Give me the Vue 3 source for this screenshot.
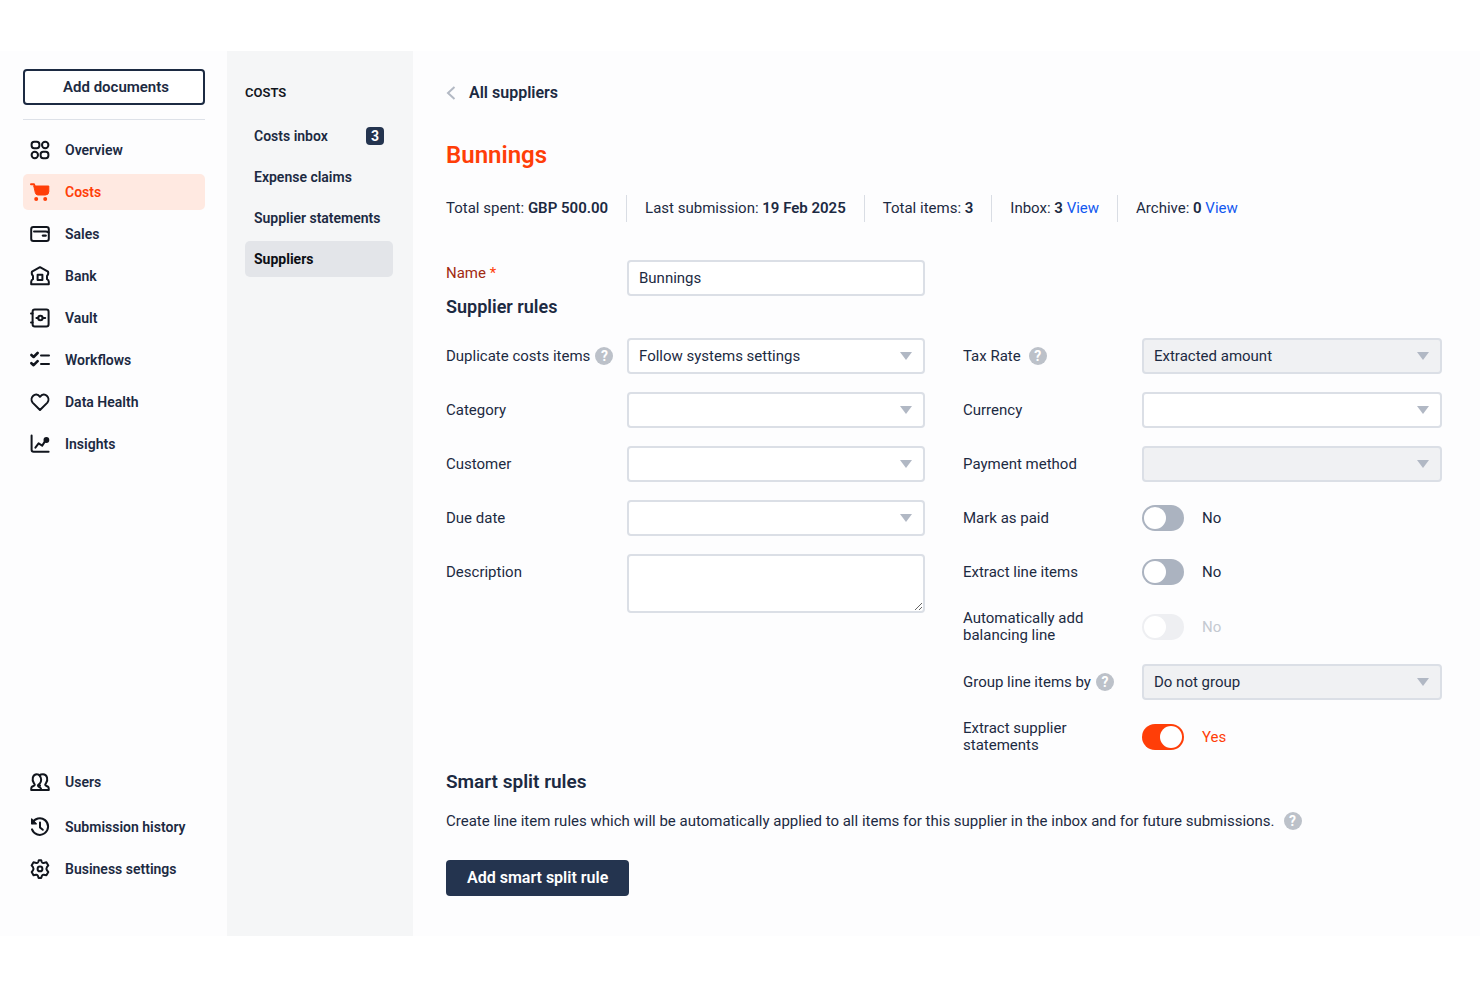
<script setup>
import { ref, reactive } from 'vue'

// inner markup of the 20x20 menu icons
const icons = {
  overview: '<rect x="1.6" y="1.8" width="7.8" height="6.4" rx="2.6"/><circle cx="15.2" cy="5" r="3.2"/><circle cx="4.8" cy="15" r="3.2"/><rect x="10.600" y="11.800" width="7.800" height="6.400" rx="2.600"/>',
  costs: '<path d="M1 2.2h3l1 3" /><path d="M4.2 4h14.6v5.6q0 3.4-3.4 3.4H7.8q-2 0-2.5-2.2z" fill="currentColor" stroke-width="1"/><circle cx="6.2" cy="17" r="2" fill="currentColor" stroke="none"/><circle cx="15.2" cy="17" r="2" fill="currentColor" stroke="none"/>',
  sales: '<rect x="1.2" y="3" width="17.6" height="14" rx="2.2"/><path d="M4 7.4h11.6q1.7 0 3 1"/><path d="M13 11.6h2.6" stroke-width="2.4"/>',
  bank: '<path d="M10 1.2 18 5.600q.8 2.800-1 4.400v3.200q1.800.8 1.800 2.600v2.400H1.200v-2.400q0-1.800 1.800-2.600V10Q1.200 8.400 2 5.600z"/><path d="M7.600 14V8.800h4.800V14z"/>',
  vault: '<rect x="2.600" y="1.600" width="16" height="16.800" rx="2.200"/><path d="M1 5.400h1.600M1 14.600h1.600M6.400 10h2M12.600 10h2.600"/><circle cx="10.400" cy="10" r="2.200"/>',
  workflows: '<path d="m1.400 5 2.200 2 4-4M1.400 13.200l2.200 2 4-4" stroke-width="2.600"/><path d="M11 5.600h8M11 14h8"/>',
  health: '<path d="M10 18 2.600 10.600C-1 6.200 5.400-1.200 10 4.800c4.600-6 11 1.400 7.400 5.800z"/>',
  insights: '<path d="M1.600 1.600v14.200q0 2 2 2h15"/><path d="m5.400 13.600 3.200-4.200 3.600 2.200 3.400-5.200"/><circle cx="16.400" cy="6" r="1.900" fill="currentColor"/>',
  users: '<path d="M9 12.400c-2 1.100-.8 2.200 1.200 3.200.9.500 1 1.400 1 2.400H1.200c0-2.800.2-3.200 2.200-4 2-.8 1.400-1.600.6-2.700C1.400 8 2.600 2.200 6.800 2.200c1.500 0 2.500.7 3.200 1.900"/><path d="M9.400 3.400C10.200 2.600 11.400 2.200 13 2.200c4.300 0 5.500 5.800 2.900 9.100-.8 1.100-1.300 1.900.7 2.700 2 .8 2.200 1.200 2.200 4h-7.600M9.800 3.800c1.900 2.200 1.700 5.700.1 7.600-.9 1.200-.9 1.700.1 2.300"/>',
  history: '<path d="M2.200 6.200A8.300 8.300 0 1 1 2 12.400"/><path d="M1.600 2v4.800h4.800z" fill="currentColor" stroke-width="1.200"/><path d="M10 5.600v4.800l2.800 2.400"/>',
  settings: '<path d="M8.200 3 8.800 1.200h2.400l.6 1.800q.5 1.300 1.900.9l2.700-.6 1.900 3.100-1.400 1.800q-1 1.600 0 3l1.400 1.900-1.900 3.200-2.700-.5q-1.300-.2-1.800 1l-.7 2.100H8.600l-.7-2.100q-.5-1.200-1.800-1l-2.600.5-1.800-3.200L3 11.200q1-1.400 0-3L1.600 6.400l1.900-3.100 2.800.6q1.400.4 1.900-.9z"/><circle cx="10" cy="9.900" r="2.400"/>',
}

const mainMenu = [
  { label: 'Overview', icon: 'overview' },
  { label: 'Costs', icon: 'costs', active: true },
  { label: 'Sales', icon: 'sales' },
  { label: 'Bank', icon: 'bank' },
  { label: 'Vault', icon: 'vault' },
  { label: 'Workflows', icon: 'workflows' },
  { label: 'Data Health', icon: 'health' },
  { label: 'Insights', icon: 'insights' },
]

const footerMenu = [
  { label: 'Users', icon: 'users' },
  { label: 'Submission history', icon: 'history' },
  { label: 'Business settings', icon: 'settings' },
]

const costsMenu = [
  { label: 'Costs inbox', count: 3 },
  { label: 'Expense claims' },
  { label: 'Supplier statements' },
  { label: 'Suppliers', active: true },
]

const stats = [
  { label: 'Total spent', value: 'GBP 500.00' },
  { label: 'Last submission', value: '19 Feb 2025' },
  { label: 'Total items', value: '3' },
  { label: 'Inbox', value: '3', link: true },
  { label: 'Archive', value: '0', link: true },
]

const name = ref('Bunnings')
const description = ref('')

const leftFields = reactive([
  { id: 'duplicates', label: 'Duplicate costs items', help: true, value: 'Follow systems settings' },
  { id: 'category', label: 'Category', value: '' },
  { id: 'customer', label: 'Customer', value: '' },
  { id: 'due-date', label: 'Due date', value: '' },
])

const rightFields = reactive([
  { id: 'tax-rate', label: 'Tax Rate', help: true, spaced: true, value: 'Extracted amount', disabled: true },
  { id: 'currency', label: 'Currency', value: '' },
  { id: 'payment-method', label: 'Payment method', value: '', disabled: true },
  { id: 'mark-paid', label: 'Mark as paid', toggle: true, on: false },
  { id: 'line-items', label: 'Extract line items', toggle: true, on: false },
  { id: 'balancing', label: 'Automatically add balancing line', toggle: true, on: false, disabled: true },
  { id: 'group-by', label: 'Group line items by', help: true, value: 'Do not group', disabled: true },
  { id: 'statements', label: 'Extract supplier statements', toggle: true, on: true },
])
</script>

<template>
  <div class="app">
    <aside class="sidebar">
      <button class="add-documents" type="button">Add documents</button>
      <nav class="menu">
        <a v-for="item in mainMenu" :key="item.label" href="#" :class="['menu-item', { active: item.active }]">
          <svg class="menu-icon" viewBox="0 0 20 20" aria-hidden="true" v-html="icons[item.icon]"></svg>
          {{ item.label }}
        </a>
      </nav>
      <nav class="menu menu-footer">
        <a v-for="item in footerMenu" :key="item.label" href="#" class="menu-item">
          <svg class="menu-icon" viewBox="0 0 20 20" aria-hidden="true" v-html="icons[item.icon]"></svg>
          {{ item.label }}
        </a>
      </nav>
    </aside>

    <aside class="submenu">
      <h2 class="submenu-title">COSTS</h2>
      <nav class="submenu-list">
        <a v-for="item in costsMenu" :key="item.label" href="#" :class="['submenu-item', { active: item.active }]">
          {{ item.label }}
          <span v-if="item.count" class="count">{{ item.count }}</span>
        </a>
      </nav>
    </aside>

    <main class="content">
      <a href="#" class="back">
        <svg class="back-icon" viewBox="0 0 10 16" aria-hidden="true"><path d="M8.500 2 2 8l6.500 6" /></svg>
        All suppliers
      </a>
      <h1 class="title">Bunnings</h1>

      <ul class="stats">
        <li v-for="stat in stats" :key="stat.label" class="stat">
          {{ stat.label }}: <strong>{{ stat.value }}</strong>
          <template v-if="stat.link">{{ ' ' }}<a href="#">View</a></template>
        </li>
      </ul>

      <form class="form" @submit.prevent>
        <div class="columns">
          <div class="field name-field">
            <label for="name">Name <span class="required">*</span></label>
            <input id="name" v-model="name" class="control" type="text" />
          </div>
        </div>

        <h2 class="section-title">Supplier rules</h2>
        <div class="columns rules">
          <div class="column">
            <div v-for="field in leftFields" :key="field.id" class="field">
              <div class="field-label">
                <label :for="field.id">{{ field.label }}</label>
                <button v-if="field.help" class="help" type="button" :aria-label="`About ${field.label}`">?</button>
              </div>
              <div class="select">
                <select :id="field.id" v-model="field.value" class="control">
                  <option>{{ field.value }}</option>
                </select>
              </div>
            </div>
            <div class="field description-field">
              <label for="description">Description</label>
              <textarea id="description" v-model="description" class="control"></textarea>
            </div>
          </div>

          <div class="column column-right">
            <div v-for="field in rightFields" :key="field.id" class="field">
              <div :class="['field-label', { spaced: field.spaced }]">
                <label :for="field.id">{{ field.label }}</label>
                <button v-if="field.help" class="help" type="button" :aria-label="`About ${field.label}`">?</button>
              </div>
              <div v-if="field.toggle" :class="['toggle', { on: field.on, disabled: field.disabled }]">
                <input :id="field.id" v-model="field.on" class="switch" type="checkbox" :disabled="field.disabled" />
                <span>{{ field.on ? 'Yes' : 'No' }}</span>
              </div>
              <div v-else class="select">
                <select :id="field.id" v-model="field.value" class="control" :disabled="field.disabled">
                  <option>{{ field.value }}</option>
                </select>
              </div>
            </div>
          </div>
        </div>

        <h2 class="section-title split-title">Smart split rules</h2>
        <p class="split-text">
          Create line item rules which will be automatically applied to all items for this supplier in the inbox and for future submissions.
          <button class="help" type="button" aria-label="About smart split rules">?</button>
        </p>
        <button class="add-rule" type="button">Add smart split rule</button>
      </form>
    </main>
  </div>
</template>

<style>
body {
  background: #fff;
}
</style>

<style scoped>
.app {
  display: flex;
  box-sizing: border-box;
  min-height: calc(100vh - 102px);
  margin: 51px 0;
  background: #fdfdfe;
  color: #1c2a42;
  font-family: Roboto, "Liberation Sans", sans-serif;
  font-size: 15px;
  line-height: 20px;
}

.app * {
  box-sizing: border-box;
}

a {
  color: inherit;
  text-decoration: none;
}

button,
input,
select,
textarea {
  font: inherit;
  color: inherit;
}

button {
  cursor: pointer;
}

.sidebar {
  display: flex;
  flex-direction: column;
  flex: 0 0 227px;
  padding: 18px 22px 49px 23px;
}

.add-documents {
  height: 36px;
  padding: 0 0 0 4px;
  border: 2px solid #1c2a42;
  border-radius: 4px;
  background: #fff;
  font-weight: 600;
}

.menu {
  display: flex;
  flex-direction: column;
  gap: 6px;
  margin-top: 14px;
  padding-top: 12px;
  border-top: 1px solid #dde1e8;
}

.menu-item {
  display: flex;
  align-items: center;
  gap: 15px;
  height: 36px;
  padding: 0 7px;
  border-radius: 5px;
  font-size: 14px;
  font-weight: 600;
  white-space: nowrap;
}

.menu-item.active {
  background: #ffe9e1;
  color: #ff3e08;
}

.menu-icon {
  flex: none;
  width: 20px;
  height: 20px;
  fill: none;
  stroke: currentColor;
  stroke-width: 2;
  stroke-linecap: round;
  stroke-linejoin: round;
  color: #11151d;
}

.active .menu-icon {
  color: #ff3e08;
}

.menu-footer {
  margin-top: auto;
  padding: 0;
  border: 0;
}

.menu-footer .menu-item:first-child {
  margin-bottom: 3px;
}

.submenu {
  flex: 0 0 186px;
  padding: 32px 20px 20px 18px;
  background: #f5f6f7;
}

.submenu-title {
  margin: 0 0 15px;
  color: #11151d;
  font-size: 13px;
  font-weight: 600;
}

.submenu-list {
  display: flex;
  flex-direction: column;
  gap: 5px;
}

.submenu-item {
  display: flex;
  align-items: center;
  justify-content: space-between;
  height: 36px;
  padding: 0 9px;
  border-radius: 5px;
  font-size: 14px;
  font-weight: 600;
  white-space: nowrap;
}

.submenu-item.active {
  background: #e3e5e9;
  color: #0b0e14;
  font-weight: 700;
}

.count {
  width: 18px;
  border-radius: 4px;
  background: #24344f;
  color: #fff;
  font-size: 14px;
  font-weight: 700;
  line-height: 18px;
  text-align: center;
}

.content {
  flex: 1;
  min-width: 0;
  padding: 32px 38px 40px 33px;
}

.back {
  display: inline-flex;
  align-items: center;
  gap: 13px;
  font-size: 16px;
  font-weight: 600;
}

.back-icon {
  width: 10px;
  height: 16px;
  fill: none;
  stroke: #b3b9c4;
  stroke-width: 2;
}

.title {
  margin: 34px 0 25px;
  color: #ff3e08;
  font-size: 24px;
  font-weight: 600;
  line-height: 30px;
}

.stats {
  display: flex;
  margin: 0;
  padding: 0;
  list-style: none;
}

.stat {
  margin-right: 18px;
  padding-right: 18px;
  border-right: 1px solid #d9dde4;
  line-height: 27px;
  white-space: nowrap;
}

.stat:last-child {
  border: 0;
}

.stat strong {
  font-weight: 600;
}

.stat a {
  color: #1258f0;
}

.form {
  margin-top: 38px;
}

.columns {
  display: grid;
  grid-template-columns: 1fr 1fr;
  gap: 38px;
}

.column {
  display: flex;
  flex-direction: column;
  gap: 18px;
}

.field {
  display: grid;
  grid-template-columns: 181px 1fr;
  align-items: center;
  min-height: 36px;
}

.column-right .field {
  grid-template-columns: 179px 1fr;
}

.name-field,
.description-field {
  align-items: start;
}

.name-field label {
  padding-top: 3px;
  color: #a12a12;
}

.description-field label {
  padding-top: 8px;
}

.required {
  color: #ff3e08;
}

.field-label {
  display: flex;
  align-items: center;
  gap: 5px;
  padding: 2px 0;
  line-height: 17px;
}

.field-label.spaced {
  gap: 8px;
}

.column-right label {
  max-width: 130px;
}

.help {
  flex: none;
  width: 18px;
  height: 18px;
  padding: 0;
  border: 0;
  border-radius: 50%;
  background: #bcc1c9;
  color: #fff;
  font-size: 14px;
  font-weight: 700;
  line-height: 18px;
  text-align: center;
}

.control {
  display: block;
  width: 100%;
  height: 36px;
  margin: 0;
  padding: 0 10px;
  border: 2px solid #dbdfe6;
  border-radius: 4px;
  background: #fff;
  appearance: none;
}

textarea.control {
  height: 59px;
  resize: vertical;
}

.control:disabled {
  background: #f0f1f3;
  color: inherit;
  opacity: 1;
}

.select {
  position: relative;
}

.select::after {
  content: '';
  position: absolute;
  top: 14px;
  right: 13px;
  border: 6px solid transparent;
  border-top: 8px solid #b1b8c4;
  border-bottom: 0;
  pointer-events: none;
}

.toggle {
  display: flex;
  align-items: center;
  gap: 18px;
}

.switch {
  width: 42px;
  height: 26px;
  margin: 0;
  padding: 2px;
  border-radius: 13px;
  background: #abb3c0;
  appearance: none;
}

.switch::before {
  content: '';
  display: block;
  width: 22px;
  height: 22px;
  border-radius: 50%;
  background: #fff;
}

.switch:checked {
  background: #ff3e08;
}

.switch:checked::before {
  margin-left: auto;
}

.toggle.on {
  color: #ff3e08;
}

.toggle.disabled {
  color: #c4c9d1;
}

.toggle.disabled .switch {
  background: #eeeff2;
}

.section-title {
  margin: 0;
  font-size: 18px;
  font-weight: 600;
  line-height: 22px;
}

.rules {
  margin-top: 20px;
}

.split-title {
  margin-top: 15px;
  font-size: 19px;
}

.split-text {
  display: flex;
  align-items: center;
  gap: 9px;
  margin: 18px 0 29px;
}

.add-rule {
  height: 36px;
  padding: 0 21px;
  border: 0;
  border-radius: 4px;
  background: #24344f;
  color: #fff;
  font-size: 16px;
  font-weight: 600;
}
</style>
